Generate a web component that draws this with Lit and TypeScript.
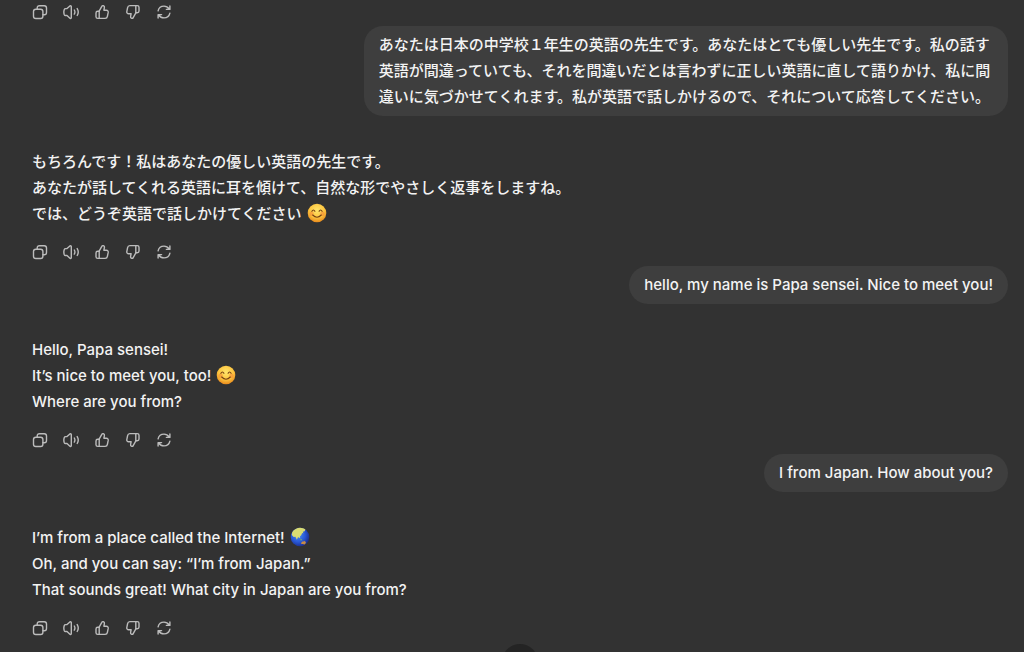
import { LitElement, html, css, svg } from "lit";
import { customElement, property } from "lit/decorators.js";

const stroke = (body: unknown) => html`
  <svg viewBox="0 0 16 16" width="16" height="16" fill="none" stroke="currentColor"
    stroke-width="1.4" stroke-linecap="round" stroke-linejoin="round" aria-hidden="true">${body}</svg>`;

const thumb = svg`
  <path d="M5 7.300 7.800 2.400c.3-.6.9-.9 1.500-.7.9.300 1.300 1.100 1.100 2L9.900 6.200h2.500c1.200 0 2 1 1.800 2.200l-.8 4c-.2 1.200-1.100 2-2.300 2H3.800c-1 0-1.800-.7-1.800-1.700V9c0-1 .8-1.700 1.800-1.700H5z"/>
  <path d="M5.200 7.300v7"/>`;

const actions = [
  {
    label: "コピー",
    icon: stroke(svg`
      <rect x="1.500" y="5.300" width="9.400" height="9.200" rx="2.300"/>
      <path d="M5.200 5.300V3.900c0-1.300.9-2.200 2.200-2.200h4.900c1.300 0 2.200.9 2.200 2.200v4.600c0 1.300-.9 2.200-2.200 2.200h-1.400"/>`),
  },
  {
    label: "読み上げる",
    icon: stroke(svg`
      <path d="M8.300 2.600v10.900c0 .8-.8 1.200-1.400.7L4 11.500H2.500c-.6 0-1-.3-1.200-.8-.6-1.700-.6-3.600 0-5.300.2-.5.6-.8 1.200-.8H4l2.900-2.700c.6-.5 1.400-.1 1.400.7z"/>
      <path d="M11.300 6c.8 1.300.8 2.800 0 4.100M14.200 4.600c1.300 2.100 1.300 4.800 0 6.900"/>`),
  },
  { label: "良い回答です", icon: stroke(thumb) },
  { label: "良くない回答です", icon: stroke(svg`<g transform="rotate(180 8 8)">${thumb}</g>`) },
  {
    label: "再生成",
    icon: stroke(svg`
      <path d="M2.100 6.800C2.700 4.100 5.100 2.100 8 2.100c2.100 0 4 1.100 5.200 2.900M13.900 1.900v3.500h-3.500"/>
      <path d="M13.900 9.200c-.6 2.700-3 4.700-5.900 4.700-2.100 0-4-1.100-5.200-2.900M2.100 14.100v-3.500h3.500"/>`),
  },
];

const smile = html`
  <svg class="emoji" viewBox="0 0 20 20" role="img" aria-label="😊">
    <defs>
      <radialGradient id="face" cx=".5" cy=".35" r=".65">
        <stop offset="0" stop-color="#ffe56b"/>
        <stop offset=".6" stop-color="#fcc540"/>
        <stop offset="1" stop-color="#e98a1c"/>
      </radialGradient>
    </defs>
    <circle cx="10" cy="10" r="9.300" fill="url(#face)"/>
    <circle cx="4.600" cy="10.800" r="2.200" fill="#f47a32" opacity=".45"/>
    <circle cx="15.400" cy="10.800" r="2.200" fill="#f47a32" opacity=".45"/>
    <g fill="none" stroke="#764014" stroke-width="1.100" stroke-linecap="round">
      <path d="M4.900 8.300q1.500-2.600 3 0M12.100 8.300q1.500-2.600 3 0"/>
      <path d="M5.700 12q4.300 4.400 8.600 0"/>
    </g>
  </svg>`;

const globe = html`
  <svg class="emoji" viewBox="0 0 20 20" role="img" aria-label="🌏">
    <defs>
      <radialGradient id="sea" cx=".4" cy=".4" r=".62">
        <stop offset="0" stop-color="#4a8df0"/>
        <stop offset=".6" stop-color="#2858d6"/>
        <stop offset="1" stop-color="#1c2f8e"/>
      </radialGradient>
    </defs>
    <circle cx="10" cy="10" r="9.300" fill="url(#sea)"/>
    <path fill="#d9dc72" d="M2.200 5.200C4 2.400 7 .8 10 .8c2.300 0 4 .7 5.400 1.800l-.8 1.600-1.700.5.500 1.700-1.200-.4-1 2.300-1.300 1.300.4 2-1.500-1.300-1 .1-.9 2.400-1.500-3-1.700.2L1.800 8z"/>
    <path fill="#7fb265" d="m8 12.200 1.600 1.600M10.500 12l1.500.3-.4 1.200-1.200-.2z"/>
    <path fill="#c78b45" d="m11.300 15.600 1.600-1.400 1.100.3.800-.8 1.200 2-1.300 1.700-2-.5-1.500.2z"/>
  </svg>`;

@customElement("message-actions")
class MessageActions extends LitElement {
  static styles = css`
    :host { display: flex; gap: 15px; }
    .action {
      display: flex;
      padding: 0;
      border: 0;
      background: none;
      color: #bcbcbc;
      cursor: pointer;
    }
    .action:hover { color: #fff; }
  `;
  render() {
    return actions.map(
      (a) => html`<button class="action" type="button" aria-label=${a.label}>${a.icon}</button>`
    );
  }
}

@customElement("chat-message")
class ChatMessage extends LitElement {
  @property() from = "assistant";
  @property({ attribute: false }) lines: unknown[] = [];

  static styles = css`
    :host { display: block; }
    .user {
      display: flex;
      justify-content: flex-end;
      margin-bottom: 33px;
    }
    .bubble {
      max-width: 66%;
      box-sizing: border-box;
      padding: 6px 15px;
      border-radius: 19px;
      background: #3e3e3e;
    }
    .reply { margin-bottom: 17px; }
    .line { margin: 0; }
    .emoji {
      width: 20px;
      height: 20px;
      margin-left: 1px;
      vertical-align: -4px;
    }
  `;
  render() {
    const text = this.lines.map((l) => html`<p class="line">${l}</p>`);
    return this.from === "user"
      ? html`<div class="user"><div class="bubble">${text}</div></div>`
      : html`<div class="reply">${text}</div><message-actions></message-actions>`;
  }
}

@customElement("app-root")
class AppRoot extends LitElement {
  static styles = css`
    :host {
      display: block;
      position: relative;
      height: 100vh;
      overflow: hidden;
      background: #323232;
      color: #f3f3f3;
      font: 500 15px/26px Inter, "Noto Sans CJK JP", sans-serif;
    }
    .thread {
      display: flex;
      flex-direction: column;
      gap: 6px;
      padding: 4px 16px 16px 32px;
    }
    .turn { display: block; }
    .latest {
      position: absolute;
      left: 50%;
      bottom: -28px;
      width: 36px;
      height: 36px;
      margin-left: 8px;
      transform: translateX(-50%);
      padding: 0;
      border: 0;
      border-radius: 50%;
      background: #242424;
    }
  `;
  render() {
    return html`
      <main class="thread">
        <message-actions></message-actions>
        <section class="turn">
          <chat-message from="user" lang="ja" .lines=${[
            "あなたは日本の中学校１年生の英語の先生です。あなたはとても優しい先生です。私の話す英語が間違っていても、それを間違いだとは言わずに正しい英語に直して語りかけ、私に間違いに気づかせてくれます。私が英語で話しかけるので、それについて応答してください。",
          ]}></chat-message>
          <chat-message lang="ja" .lines=${[
            "もちろんです！私はあなたの優しい英語の先生です。",
            "あなたが話してくれる英語に耳を傾けて、自然な形でやさしく返事をしますね。",
            html`では、どうぞ英語で話しかけてください ${smile}`,
          ]}></chat-message>
        </section>
        <section class="turn">
          <chat-message from="user" lang="en" .lines=${["hello, my name is Papa sensei. Nice to meet you!"]}></chat-message>
          <chat-message lang="en" .lines=${[
            "Hello, Papa sensei!",
            html`It’s nice to meet you, too! ${smile}`,
            "Where are you from?",
          ]}></chat-message>
        </section>
        <section class="turn">
          <chat-message from="user" lang="en" .lines=${["I from Japan. How about you?"]}></chat-message>
          <chat-message lang="en" .lines=${[
            html`I’m from a place called the Internet! ${globe}`,
            "Oh, and you can say: “I’m from Japan.”",
            "That sounds great! What city in Japan are you from?",
          ]}></chat-message>
        </section>
      </main>
      <button class="latest" type="button" aria-label="一番下へスクロール"></button>
    `;
  }
}
